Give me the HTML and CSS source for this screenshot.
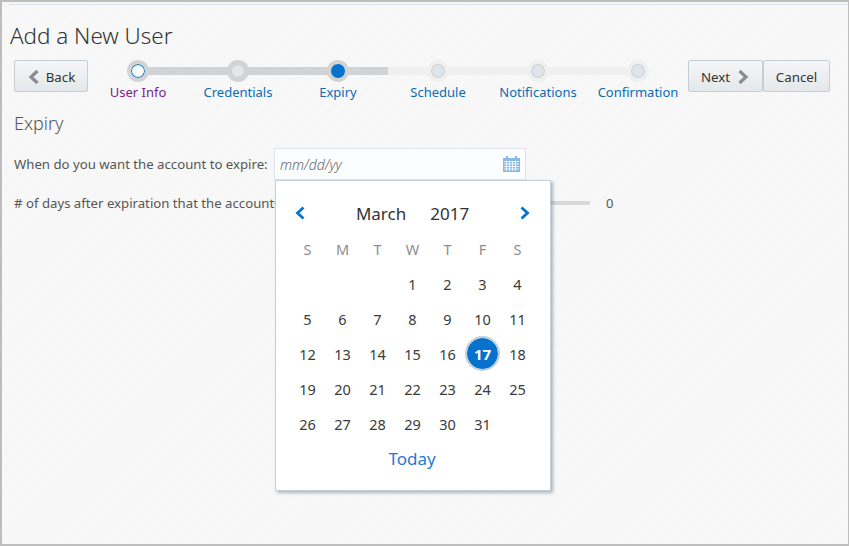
FILE: index.html
```html
<!DOCTYPE html>
<html lang="en">
<head>
  <meta charset="UTF-8" />
  <title>Add a New User</title>
  <link rel="stylesheet" href="styles.css">
</head>
<body>
<div class="frame">
  <div class="top-line"></div>
  <h1>Add a New User</h1>

  <div class="wizard">
    <button class="btn btn-back">
      <svg width="14" height="16" viewBox="0 0 14 16"><path d="M10.5 2 L4 8 L10.5 14" fill="none" stroke="#8a8d90" stroke-width="3.2"/></svg>
      Back
    </button>
    <div class="train">
      <div class="step done"><span class="dot dot-visited"></span><span class="step-label label-visited">User Info</span></div>
      <div class="step done"><span class="dot dot-grey"></span><span class="step-label">Credentials</span></div>
      <div class="step current"><span class="dot dot-current"></span><span class="step-label">Expiry</span></div>
      <div class="step"><span class="dot"></span><span class="step-label">Schedule</span></div>
      <div class="step"><span class="dot"></span><span class="step-label">Notifications</span></div>
      <div class="step last"><span class="dot"></span><span class="step-label">Confirmation</span></div>
    </div>
    <div class="actions">
      <button class="btn btn-next">
        Next
        <svg width="14" height="16" viewBox="0 0 14 16"><path d="M3.5 2 L10 8 L3.5 14" fill="none" stroke="#8a8d90" stroke-width="3.2"/></svg>
      </button>
      <button class="btn btn-cancel">Cancel</button>
    </div>
  </div>

  <h2>Expiry</h2>

  <div class="form-row">
    <label class="field-label">When do you want the account to expire:</label>
    <div class="date-box">
      <span class="placeholder">mm/dd/yy</span>
      <svg width="17" height="16" viewBox="0 0 17 16">
        <path d="M0 2h3V0h2v2h7V0h2v2h3v14H0z" fill="#8ab9e6"/>
        <path d="M1 5.5h15M1 8h15M1 10.5h15M1 13h15M3.5 5v10M6.5 5v10M9.5 5v10M12.5 5v10" stroke="#fff" stroke-width="0.8"/>
      </svg>
      <div class="calendar">
        <div class="cal-head">
          <svg width="12" height="14" viewBox="0 0 12 14"><path d="M9.5 1.5 L3.5 7 L9.5 12.5" fill="none" stroke="#0572ce" stroke-width="2.8"/></svg>
          <div class="cal-title"><span>March</span><span>2017</span></div>
          <svg width="12" height="14" viewBox="0 0 12 14"><path d="M2.5 1.5 L8.5 7 L2.5 12.5" fill="none" stroke="#0572ce" stroke-width="2.8"/></svg>
        </div>
        <div class="cal-grid">
          <span class="dow">S</span><span class="dow">M</span><span class="dow">T</span><span class="dow">W</span><span class="dow">T</span><span class="dow">F</span><span class="dow">S</span>
          <span></span><span></span><span></span><span>1</span><span>2</span><span>3</span><span>4</span>
          <span>5</span><span>6</span><span>7</span><span>8</span><span>9</span><span>10</span><span>11</span>
          <span>12</span><span>13</span><span>14</span><span>15</span><span>16</span><span class="today"><b>17</b></span><span>18</span>
          <span>19</span><span>20</span><span>21</span><span>22</span><span>23</span><span>24</span><span>25</span>
          <span>26</span><span>27</span><span>28</span><span>29</span><span>30</span><span>31</span><span></span>
        </div>
        <div class="cal-today">Today</div>
      </div>
    </div>
  </div>

  <div class="form-row slider-row">
    <label class="field-label"># of days after expiration that the account</label>
    <div class="slider"></div>
    <span class="slider-value">0</span>
  </div>
</div>
</body>
</html>
```

FILE: styles.css
```css
* { margin: 0; padding: 0; box-sizing: border-box; }
html, body {
  height: 100%; overflow: hidden;
  font-family: "Noto Sans", "Open Sans", sans-serif;
  color: #333;
}
.frame {
  height: 546px; width: 849px;
  border: 2px solid #bdbdbd; border-right-width: 1px;
  background: repeating-linear-gradient(-45deg, #f9f9f9 0, #f9f9f9 1px, #f6f6f6 1px, #f6f6f6 2px);
  overflow: hidden;
}
.top-line {
  height: 1px; margin: 2px 0 0 7px;
  background: #dbe4ee;
}
h1 {
  font-size: 22.4px; font-weight: 300; line-height: 30px;
  margin: 16px 0 0 8px; color: #333;
}
.wizard {
  display: flex; margin: 9px 0 0 12px;
  height: 51px;
}
.btn {
  height: 32px; display: flex; align-items: center; justify-content: center;
  font-family: inherit; font-size: 13.3px; color: #333;
  background: linear-gradient(#f5f6f7, #e5e8ea);
  border: 1px solid #c4ced7; border-radius: 2px;
  padding-top: 1px;
}
.btn-back { width: 74px; gap: 5px; }
.btn-next { width: 75px; gap: 6px; }
.btn-cancel { width: 67px; }
.actions { display: flex; }

.train { display: grid; grid-template-columns: repeat(6, 100px); }
.step {
  position: relative; display: flex; flex-direction: column; align-items: center;
}
.step::after {
  content: ""; position: absolute; left: 50%; top: 7px;
  width: 100%; height: 8px; background: #f0f0f0;
}
.step.done::after { background: #d1d3d4; }
.step.current::after {
  background: linear-gradient(to right, #d1d3d4 50%, #f0f0f0 50%);
}
.step.last::after { display: none; }
.dot {
  position: relative; z-index: 1;
  width: 22px; height: 22px; border-radius: 50%;
  background: #dfe4e9; border: 4px solid #f0f0f0;
  box-shadow: inset 0 0 0 1px #c4ced7;
}
.dot-grey { border-color: #d1d3d4; background: #e4e7ea; }
.dot-visited {
  border-color: #d1d3d4; background: #fff;
  box-shadow: inset 0 0 0 1px #0572ce;
}
.dot-current { border-color: #d1d3d4; background: #0572ce; box-shadow: none; }
.step-label {
  position: relative; z-index: 1;
  font-size: 13px; line-height: 16px; margin-top: 2px;
  color: #0a6cb5; white-space: nowrap;
}
.label-visited { color: #7a1d8f; }

h2 {
  font-size: 18px; font-weight: 300; line-height: 24px;
  margin: 0 0 0 12px; color: #555;
}
.form-row {
  display: flex; align-items: center; margin: 13px 0 0 12px;
  height: 32px;
}
.field-label {
  font-size: 13.2px; color: #555; white-space: nowrap; flex: none;
  width: 260px;
}
.date-box {
  position: relative; width: 252px; height: 32px;
  display: flex; align-items: center; justify-content: space-between;
  padding: 0 5px 0 5px;
  background: #fcfdfe; border: 1px solid #dfe4ea;
}
.placeholder { font-size: 14px; font-style: italic; font-weight: 300; color: #666; }

.calendar {
  position: absolute; left: 0; top: 31px; z-index: 10;
  width: 276px; height: 311px;
  background: #fff; border: 1px solid #c4ced7;
  box-shadow: 2px 2px 3px rgba(100, 115, 130, 0.5);
  padding: 0 16px 0 14px;
}
.cal-head {
  display: flex; align-items: center; justify-content: space-between;
  height: 32px; margin-top: 16px; padding: 0 3px 0 4px;
}
.cal-title {
  display: flex; gap: 24px;
  font-size: 17px; color: #333;
}
.cal-grid {
  display: grid; grid-template-columns: repeat(7, 35px); grid-auto-rows: 35px;
  margin-top: 2px; align-items: center; justify-items: center;
  font-size: 14.5px; color: #3a3a3a;
}
.dow { color: #8b8e91; }
.today {
  width: 35px; height: 35px; border-radius: 50%;
  display: flex; align-items: center; justify-content: center;
  background: #0572ce; color: #fff; border: 2px solid #c4ced7;
  background-clip: padding-box; font-size: 15px;
}
.cal-today {
  margin-top: 2px; text-align: center;
  font-size: 17px; line-height: 32px; color: #1f7bd1;
}
.slider-row { margin-top: 7px; }
.slider {
  flex: none; width: 316px; height: 4px; background: #d6d8da;
}
.slider-value { font-size: 13px; margin-left: 16px; color: #555; }
```
